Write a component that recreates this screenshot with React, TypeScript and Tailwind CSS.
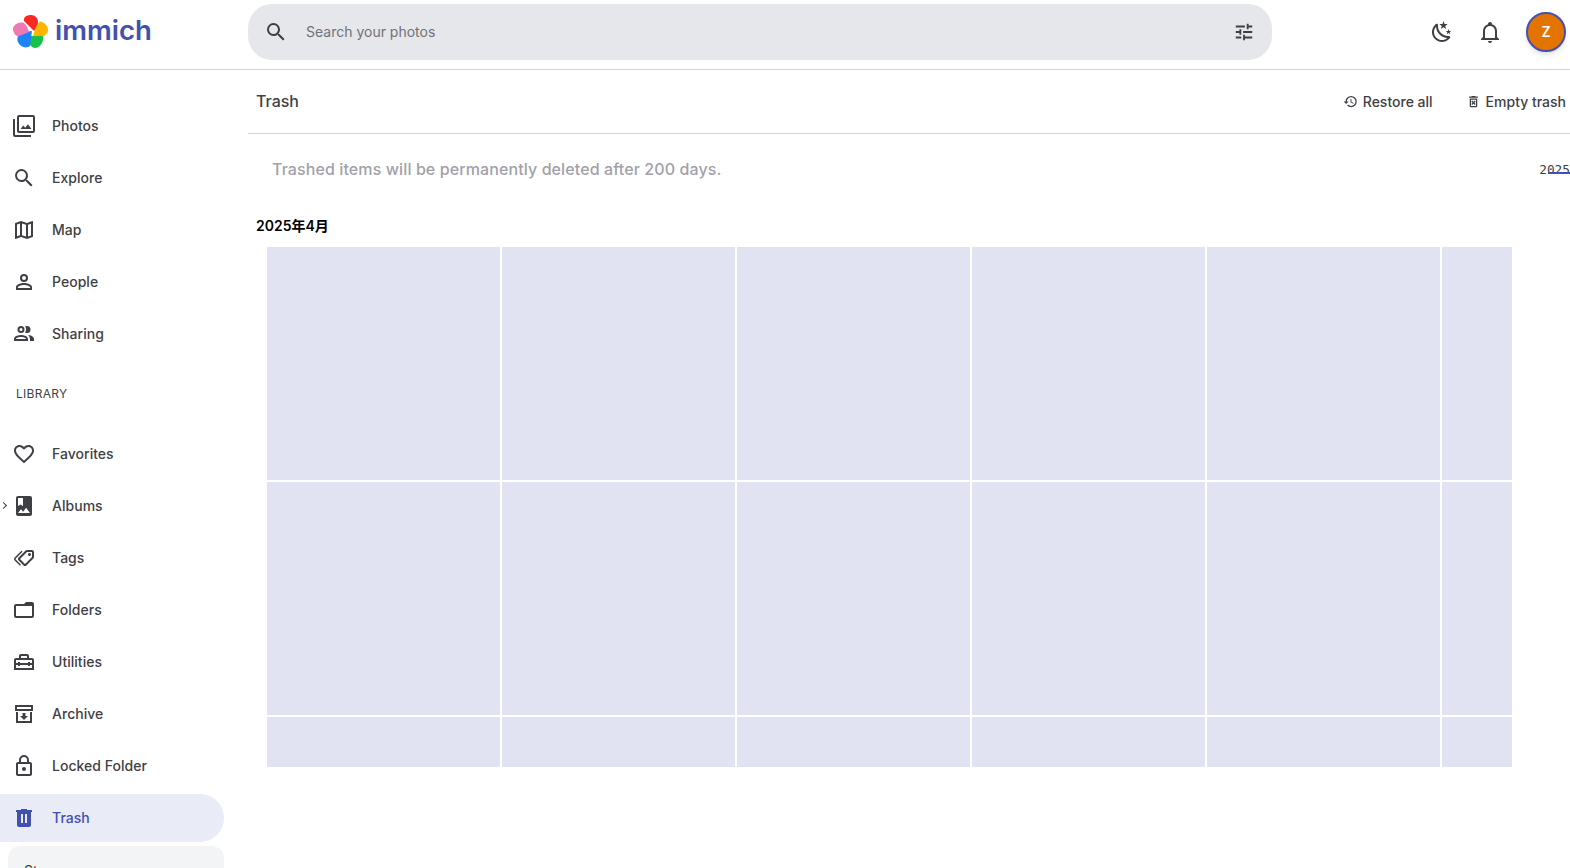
import React from "react";

const P = {
  photos: "M21,17H7V3H21M21,1H7A2,2 0 0,0 5,3V17A2,2 0 0,0 7,19H21A2,2 0 0,0 23,17V3A2,2 0 0,0 21,1M3,5H1V21A2,2 0 0,0 3,23H19V21H3M15.96,10.29L13.21,13.83L11.25,11.47L8.5,15H19.5L15.96,10.29Z",
  magnify: "M9.5,3A6.5,6.5 0 0,1 16,9.5C16,11.11 15.41,12.59 14.44,13.73L14.71,14H15.5L20.5,19L19,20.5L14,15.5V14.71L13.73,14.44C12.59,15.41 11.11,16 9.5,16A6.5,6.5 0 0,1 3,9.5A6.5,6.5 0 0,1 9.5,3M9.5,5C7,5 5,7 5,9.5C5,12 7,14 9.5,14C12,14 14,12 14,9.5C14,7 12,5 9.5,5Z",
  map: "M20.5,3L20.34,3.03L15,5.1L9,3L3.36,4.9C3.15,4.97 3,5.15 3,5.38V20.5A0.5,0.5 0 0,0 3.5,21L3.66,20.97L9,18.9L15,21L20.64,19.1C20.85,19.03 21,18.85 21,18.62V3.5A0.5,0.5 0 0,0 20.5,3M10,5.47L14,6.87V18.53L10,17.13V5.47M5,6.46L8,5.45V17.15L5,18.31V6.46M19,17.54L16,18.55V6.86L19,5.7V17.54Z",
  person: "M12,4A4,4 0 0,1 16,8A4,4 0 0,1 12,12A4,4 0 0,1 8,8A4,4 0 0,1 12,4M12,6A2,2 0 0,0 10,8A2,2 0 0,0 12,10A2,2 0 0,0 14,8A2,2 0 0,0 12,6M12,13C14.67,13 20,14.33 20,17V20H4V17C4,14.33 9.33,13 12,13M12,14.9C9.03,14.9 5.9,16.36 5.9,17V18.1H18.1V17C18.1,16.36 14.97,14.9 12,14.9Z",
  sharing: "M13.07 10.41A5 5 0 0 0 13.07 4.59A3.39 3.39 0 0 1 15 4A3.5 3.5 0 0 1 15 11A3.39 3.39 0 0 1 13.07 10.41M5.5 7.5A3.5 3.5 0 1 1 9 11A3.5 3.5 0 0 1 5.5 7.5M7.5 7.5A1.5 1.5 0 1 0 9 6A1.5 1.5 0 0 0 7.5 7.5M16 17V19H2V17S2 13 9 13 16 17 16 17M14 17C13.86 16.22 12.67 15 9 15S4.07 16.29 4 17M15.95 13A5.32 5.32 0 0 1 18 17V19H22V17S22 13.37 15.94 13Z",
  heart: "M12.1,18.55L12,18.65L11.89,18.55C7.14,14.24 4,11.39 4,8.5C4,6.5 5.5,5 7.5,5C9.04,5 10.54,6 11.07,7.36H12.93C13.46,6 14.96,5 16.5,5C18.5,5 20,6.5 20,8.5C20,11.39 16.86,14.24 12.1,18.55M16.5,3C14.76,3 13.09,3.81 12,5.08C10.91,3.81 9.24,3 7.5,3C4.42,3 2,5.41 2,8.5C2,12.27 5.4,15.36 10.55,20.03L12,21.35L13.45,20.03C18.6,15.36 22,12.27 22,8.5C22,5.41 19.58,3 16.5,3Z",
  album: "M6,19L9,15.14L11.14,17.72L14.14,13.86L18,19H6M6,4H11V12L8.5,10.5L6,12M18,2H6A2,2 0 0,0 4,4V20A2,2 0 0,0 6,22H18A2,2 0 0,0 20,20V4A2,2 0 0,0 18,2Z",
  tags: "M6.5 10C7.3 10 8 9.3 8 8.5S7.3 7 6.5 7 5 7.7 5 8.5 5.7 10 6.5 10M9 6L16 13L11 18L4 11V6H9M9 4H4C2.9 4 2 4.9 2 6V11C2 11.6 2.2 12.1 2.6 12.4L9.6 19.4C9.9 19.8 10.4 20 11 20S12.1 19.8 12.4 19.4L17.4 14.4C17.8 14 18 13.5 18 13C18 12.4 17.8 11.9 17.4 11.6L10.4 4.6C10 4.2 9.5 4 9 4M13.5 5.7L14.5 4.7L21.4 11.6C21.8 12 22 12.5 22 13S21.8 14.1 21.4 14.4L16 19.8L15 18.8L20.7 13L13.5 5.7Z",
  folder: "M20,18H4V8H20M20,6H12L10,4H4C2.89,4 2,4.89 2,6V18A2,2 0 0,0 4,20H20A2,2 0 0,0 22,18V8C22,6.89 21.1,6 20,6Z",
  toolbox: "M20 8H17V6C17 4.9 16.1 4 15 4H9C7.9 4 7 4.9 7 6V8H4C2.9 8 2 8.9 2 10V20H22V10C22 8.9 21.1 8 20 8M9 6H15V8H9V6M20 18H4V15H6V16H8V15H16V16H18V15H20V18M18 13V12H16V13H8V12H6V13H4V10H20V13H18Z",
  archive: "M20 21H4V10H6V19H18V10H20V21M3 3H21V9H3V3M5 5V7H19V5M10.5 11V14H8L12 18L16 14H13.5V11",
  lock: "M12,17C10.89,17 10,16.1 10,15C10,13.89 10.89,13 12,13A2,2 0 0,1 14,15A2,2 0 0,1 12,17M18,20V10H6V20H18M18,8A2,2 0 0,1 20,10V20A2,2 0 0,1 18,22H6C4.89,22 4,21.1 4,20V10C4,8.89 4.89,8 6,8H7V6A5,5 0 0,1 12,1A5,5 0 0,1 17,6V8H18M12,3A3,3 0 0,0 9,6V8H15V6A3,3 0 0,0 12,3Z",
  trash: "M9,3V4H4V6H5V19A2,2 0 0,0 7,21H17A2,2 0 0,0 19,19V6H20V4H15V3H9M9,8H11V17H9V8M13,8H15V17H13V8Z",
  tune: "M3,17V19H9V17H3M3,5V7H13V5H3M13,21V19H21V17H13V15H11V21H13M7,9V11H3V13H7V15H9V9H7M21,13V11H11V13H21M15,9H17V7H21V5H17V3H15V9Z",
  night: "M17.75,4.09L15.22,6.03L16.13,9.09L13.5,7.28L10.87,9.09L11.78,6.03L9.25,4.09L12.44,4L13.5,1L14.56,4L17.75,4.09M21.25,11L19.61,12.25L20.2,14.23L18.5,13.06L16.8,14.23L17.39,12.25L15.75,11L17.81,10.95L18.5,9L19.19,10.95L21.25,11M18.97,15.95C19.8,15.87 20.69,17.05 20.16,17.8C19.84,18.25 19.5,18.67 19.08,19.07C15.17,23 8.84,23 4.94,19.07C1.03,15.17 1.03,8.83 4.94,4.93C5.34,4.53 5.76,4.17 6.21,3.85C6.96,3.32 8.14,4.21 8.06,5.04C7.79,7.9 8.75,10.87 10.95,13.06C13.14,15.26 16.1,16.22 18.97,15.95M17.33,17.97C14.5,17.81 11.7,16.64 9.53,14.5C7.36,12.31 6.2,9.5 6.04,6.68C3.23,9.82 3.34,14.64 6.35,17.66C9.37,20.67 14.19,20.78 17.33,17.97Z",
  bell: "M10 21H14C14 22.1 13.1 23 12 23S10 22.1 10 21M21 19V20H3V19L5 17V11C5 7.9 7 5.2 10 4.3V4C10 2.9 10.9 2 12 2S14 2.9 14 4V4.3C17 5.2 19 7.9 19 11V17L21 19M17 11C17 8.2 14.8 6 12 6S7 8.2 7 11V18H17V11Z",
  history: "M13.5,8H12V13L16.28,15.54L17,14.33L13.5,12.25V8M13,3A9,9 0 0,0 4,12H1L4.96,16.03L9,12H6A7,7 0 0,1 13,5A7,7 0 0,1 20,12A7,7 0 0,1 13,19C11.07,19 9.32,18.21 8.06,16.94L6.64,18.36C8.27,20 10.5,21 13,21A9,9 0 0,0 22,12A9,9 0 0,0 13,3",
  deleteForever: "M14.12,10.47L12,12.59L9.87,10.47L8.46,11.88L10.59,14L8.47,16.12L9.88,17.53L12,15.41L14.12,17.53L15.53,16.12L13.41,14L15.53,11.88L14.12,10.47M15.5,4L14.5,3H9.5L8.5,4H5V6H19V4H15.5M6,19A2,2 0 0,0 8,21H16A2,2 0 0,0 18,19V7H6V19M8,9H16V19H8V9Z",
};

function Icon({ d, className = "" }: { d: string; className?: string }) {
  return (
    <svg viewBox="0 0 24 24" fill="currentColor" className={className}>
      <path d={d} />
    </svg>
  );
}

function Logo() {
  return (
    <svg viewBox="0 0 36 36" className="w-[36px] h-[36px] shrink-0">
      <path d="M21 17L11 7C10 3 14 1 18 1C22 1 25 4 25 8C25 11 23 14 21 17Z" fill="#fa2921" />
      <path d="M20 23C21 18 23 11 27 7.5C31 8 35 12 35 16C35 20 31 23 27 23Z" fill="#ffb400" />
      <path d="M15 22L30 22C31 28 27 34 22 34C18 34 15 29 15 22Z" fill="#18c249" />
      <path d="M19 17C18 22 18 28 17 32C13 35 7 33 5 28C3 24 6 19 10 18Z" fill="#1e83f7" />
      <path d="M16 18L5 22.5C1 21 0 17 0 14C1 10 6 8 10 8.5C13 10 15 14 16 18Z" fill="#ed79b5" />
    </svg>
  );
}

const main = [
  ["Photos", P.photos, ""],
  ["Explore", P.magnify, ""],
  ["Map", P.map, ""],
  ["People", P.person, ""],
  ["Sharing", P.sharing, ""],
] as const;

const library = [
  ["Favorites", P.heart, ""],
  ["Albums", P.album, ""],
  ["Tags", P.tags, "-scale-x-100"],
  ["Folders", P.folder, "-scale-x-100"],
  ["Utilities", P.toolbox, ""],
  ["Archive", P.archive, ""],
  ["Locked Folder", P.lock, ""],
] as const;

function NavItem({ label, d, flip, active, chevron }: { label: string; d: string; flip?: string; active?: boolean; chevron?: boolean }) {
  return (
    <div
      className={
        "relative flex items-center h-[48px] w-[224px] mb-[4px] pl-[12px] gap-[16px] rounded-r-full text-[14px] font-medium leading-none " +
        (active ? "bg-[#e9ebf6] text-[#4250af]" : "text-[#3f3f46]")
      }
    >
      {chevron && <span className="absolute left-[1px] top-[21px] w-[5px] h-[5px] border-t border-r border-[#3f3f46] rotate-45" />}
      <Icon d={d} className={"w-[24px] h-[24px] shrink-0 " + (flip ?? "")} />
      <span className="tracking-[0.03px]">{label}</span>
    </div>
  );
}

export default function App() {
  return (
    <div className="w-full h-[868px] overflow-hidden bg-white font-['Inter','Liberation_Sans','Noto_Sans_CJK_JP',sans-serif] flex flex-col">
      <header className="h-[70px] shrink-0 flex items-center pb-[6px] border-b border-[#d4d4d8]">
        <div className="w-[248px] shrink-0 flex items-center pl-[13px] gap-[6px]">
          <Logo />
          <span className="text-[27.5px] font-semibold leading-none text-[#4250af] mb-[1px]">immich</span>
        </div>
        <div className="w-[1024px] shrink-0 h-[56px] rounded-[24px] bg-[#e5e7eb] flex items-center pl-[16px] pr-[16px]">
          <Icon d={P.magnify} className="w-[24px] h-[24px] text-[#3f3f46]" />
          <span className="ml-[18px] text-[14px] text-[#71717a]">Search your photos</span>
          <Icon d={P.tune} className="w-[22px] h-[22px] ml-auto mr-[1px] text-[#3f3f46]" />
        </div>
        <div className="ml-auto flex items-center pr-[4px]">
          <Icon d={P.night} className="w-[24px] h-[24px] text-[#3f3f46] mr-[24px]" />
          <Icon d={P.bell} className="w-[24px] h-[24px] text-[#3f3f46] mr-[24px]" />
          <div className="w-[40px] h-[40px] rounded-full bg-[#e37400] border-[2px] border-[#4250af] shadow-md flex items-center justify-center text-white text-[14px] font-semibold">
            Z
          </div>
        </div>
      </header>
      <div className="flex flex-1 min-h-0">
        <aside className="w-[248px] shrink-0 pt-[32px] overflow-hidden">
          {main.map(([l, d, f]) => (
            <NavItem key={l} label={l} d={d} flip={f} />
          ))}
          <div className="h-[68px] pl-[16px] pb-[4px] flex items-center text-[12px] leading-none text-[#3f3f46] tracking-[0.3px]">LIBRARY</div>
          {library.map(([l, d, f]) => (
            <NavItem key={l} label={l} d={d} flip={f} chevron={l === "Albums"} />
          ))}
          <NavItem label="Trash" d={P.trash} active />
          <div className="ml-[8px] w-[216px] h-[60px] rounded-t-[12px] bg-[#f3f4f6] pl-[16px] pt-[14px] text-[14px] text-[#3f3f46]">Storage</div>
        </aside>
        <main className="flex-1 min-w-0 relative">
          <div className="h-[64px] flex items-center justify-between border-b border-[#d4d4d8] pl-[8px] pr-[4px]">
            <span className="text-[16px] font-medium text-[#3f3f46] mb-[2px]">Trash</span>
            <div className="flex items-center text-[14px] font-medium text-[#3f3f46]">
              <Icon d={P.history} className="w-[15px] h-[15px] mr-[5px]" />
              <span>Restore all</span>
              <Icon d={P.deleteForever} className="w-[15px] h-[15px] ml-[33px] mr-[5px]" />
              <span>Empty trash</span>
            </div>
          </div>
          <p className="mt-[25px] ml-[24px] text-[16px] leading-[20px] font-medium text-[#a1a1aa] tracking-[0.1px]">
            Trashed items will be permanently deleted after 200 days.
          </p>
          <div className="mt-[37px] ml-[8px] text-[14px] leading-[20px] font-semibold text-black">2025年4月</div>
          <div className="mt-[11px] ml-[19px] w-[1245px] h-[520px] overflow-hidden grid grid-cols-[repeat(6,233px)] grid-rows-[233px_233px_233px] gap-[2px]">
            {Array.from({ length: 18 }, (_, i) => (
              <div key={i} className="bg-[#e1e3f3]" />
            ))}
          </div>
          <div className="absolute right-0 top-[94px] text-[12.8px] leading-none font-['DejaVu_Sans_Mono',monospace] text-[#3f3f46]">2025</div>
          <div className="absolute right-0 top-[102px] w-[22px] h-[1.5px] bg-[#4250af]" />
        </main>
      </div>
    </div>
  );
}
